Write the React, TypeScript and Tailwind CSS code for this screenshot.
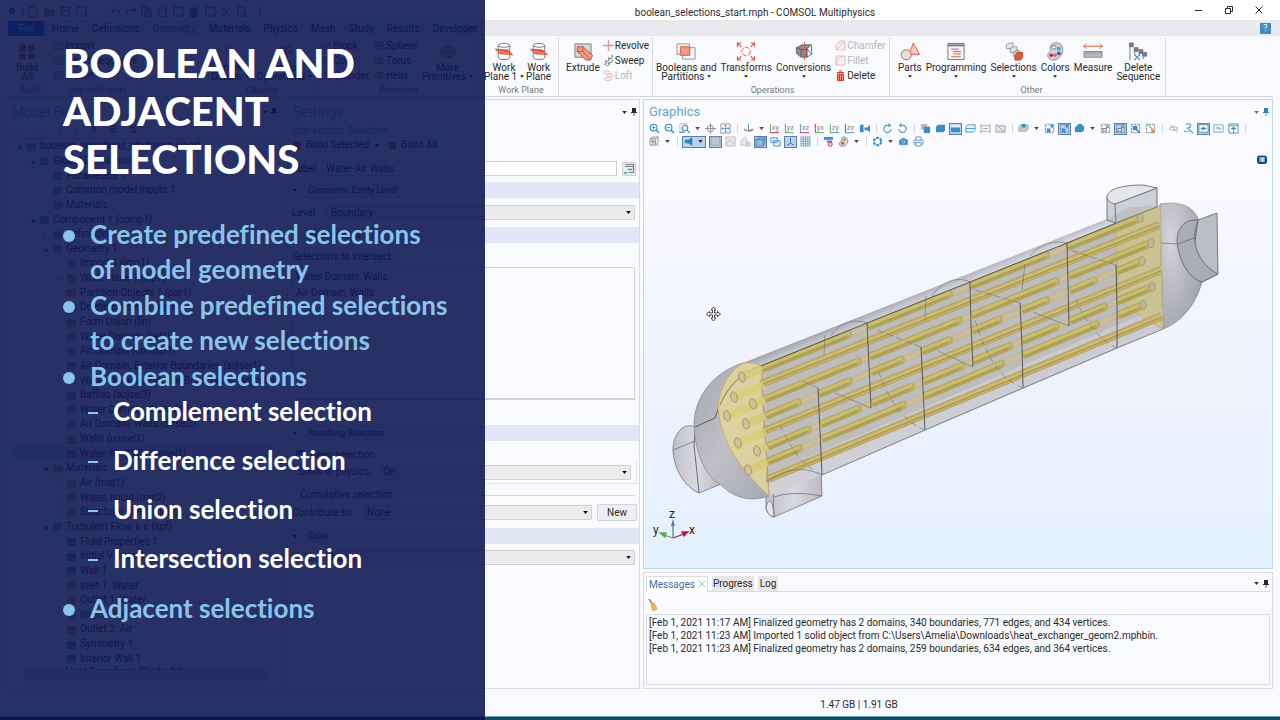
import type { ReactNode } from 'react'
import { Camera, Printer } from 'lucide-react'

const BLUE = '#3d8ec4'
const RED = '#dd5a3c'

const tabs = ['Home', 'Definitions', 'Geometry', 'Materials', 'Physics', 'Mesh', 'Study', 'Results', 'Developer']

const tree = [
  { depth: 0, label: 'boolean_selections_start.mph', tag: '(root)', color: '#3d8ec4', open: true },
  { depth: 1, label: 'Global Definitions', color: '#3d8ec4', open: true },
  { depth: 2, label: 'Parameters 1', color: '#8a8d92' },
  { depth: 2, label: 'Common model inputs 1', color: '#3d8ec4' },
  { depth: 2, label: 'Materials', color: '#b08a4c' },
  { depth: 1, label: 'Component 1', tag: '(comp1)', color: '#2374c4', open: true },
  { depth: 2, label: 'Definitions', color: '#3d8ec4', closed: true },
  { depth: 2, label: 'Geometry 1', color: '#8a8d92', open: true },
  { depth: 3, label: 'Import 1', tag: '(imp1)', color: '#8a8d92' },
  { depth: 3, label: 'Work Plane 1', tag: '(wp1)', color: '#dd5a3c', closed: true },
  { depth: 3, label: 'Partition Objects 1', tag: '(par1)', color: '#dd5a3c' },
  { depth: 3, label: 'Delete Entities 1', tag: '(del1)', color: '#dd5a3c' },
  { depth: 3, label: 'Form Union', tag: '(fin)', color: '#dd5a3c' },
  { depth: 3, label: 'Water Domain', tag: '(sel1)', color: '#8b6cb0' },
  { depth: 3, label: 'Air Domain', tag: '(comsel1)', color: '#8b6cb0' },
  { depth: 3, label: 'Air Domain, Exterior Boundaries', tag: '(adjsel1)', color: '#8b6cb0' },
  { depth: 3, label: 'Water Domain, Exterior Boundaries', tag: '(adjsel2)', color: '#8b6cb0' },
  { depth: 3, label: 'Baffles', tag: '(adjsel3)', color: '#8b6cb0' },
  { depth: 3, label: 'Water Domain, Walls', tag: '(difsel1)', color: '#8a8d92' },
  { depth: 3, label: 'Air Domain, Walls', tag: '(difsel2)', color: '#8a8d92' },
  { depth: 3, label: 'Walls', tag: '(unisel1)', color: '#dd5a3c' },
  { depth: 3, label: 'Water-Air Walls', tag: '(intsel1)', color: '#dd5a3c', selected: true },
  { depth: 2, label: 'Materials', color: '#b08a4c', open: true },
  { depth: 3, label: 'Air', tag: '(mat1)', color: '#b08a4c', closed: true },
  { depth: 3, label: 'Water, liquid', tag: '(mat2)', color: '#b08a4c', closed: true },
  { depth: 3, label: 'Structural steel', tag: '(mat3)', color: '#b08a4c', closed: true },
  { depth: 2, label: 'Turbulent Flow, k-ε', tag: '(spf)', color: '#3d8ec4', open: true },
  { depth: 3, label: 'Fluid Properties 1', color: '#2374c4' },
  { depth: 3, label: 'Initial Values 1', color: '#2374c4' },
  { depth: 3, label: 'Wall 1', color: '#2374c4' },
  { depth: 3, label: 'Inlet 1: Water', color: '#b08a4c' },
  { depth: 3, label: 'Outlet 1: Water', color: '#b08a4c' },
  { depth: 3, label: 'Inlet 2: Air', color: '#b08a4c' },
  { depth: 3, label: 'Outlet 2: Air', color: '#b08a4c' },
  { depth: 3, label: 'Symmetry 1', color: '#2374c4' },
  { depth: 3, label: 'Interior Wall 1', color: '#2374c4' },
]

const indents = ['pl-[5px]', 'pl-[18px]', 'pl-[31px]', 'pl-[45px]']

const messages = [
  '[Feb 1, 2021 11:17 AM] Finalized geometry has 2 domains, 340 boundaries, 771 edges, and 434 vertices.',
  '[Feb 1, 2021 11:23 AM] Imported 1 solid object from C:\\Users\\Amelia\\Downloads\\heat_exchanger_geom2.mphbin.',
  '[Feb 1, 2021 11:23 AM] Finalized geometry has 2 domains, 259 boundaries, 634 edges, and 364 vertices.',
]

function Caret({ className = '' }: { className?: string }) {
  return (
    <svg viewBox="0 0 6 4" className={`h-[3px] w-[6px] shrink-0 ${className}`} aria-hidden>
      <path d="M0 0h6L3 4z" fill="currentColor" />
    </svg>
  )
}

function Pin() {
  return (
    <svg viewBox="0 0 6 8" className="h-[8px] w-[6px]" aria-hidden>
      <path d="M1 0h4v4h1v1H0V4h1zM2.6 5h.8v3h-.8z" fill="currentColor" />
    </svg>
  )
}

function PanelMenu() {
  return (
    <div className="flex items-center gap-[4px]">
      <button aria-label="Panel menu"><Caret className="w-[5px]!" /></button>
      <button aria-label="Pin panel"><Pin /></button>
    </div>
  )
}

/* ---------- ribbon ---------- */

const ribbonIcons: Record<string, ReactNode> = {
  build: <path d="M2 3h7v7H2zM11 3h7v7h-7zM2 12h7v6H2zM11 12h7v6h-7z" fill={RED} />,
  cleanup: <path d="M4 5l12 11M16 5L4 16M10 3v14" stroke={RED} fill="none" />,
  virtual: <path d="M2 12l5-7 5 7-5 5zM12 5h6v6h-6z" stroke={RED} fill="none" />,
  primitives: <><ellipse cx="10" cy="10" rx="8" ry="6" stroke={RED} fill="#f3c5b8" /><path d="M2 10h16M10 4v12" stroke={RED} fill="none" /></>,
  workplane: (
    <>
      <ellipse cx="10" cy="3.5" rx="6" ry="2" fill="#fff" stroke="#74777c" />
      <path d="M4 3.5v13c0 2.6 12 2.6 12 0v-13" fill="none" stroke="#74777c" />
      <path d="M0 7l14 1 6 6-14-1z" fill={RED} />
      <path d="M4 9.500l12 3" stroke="#f5b19f" strokeWidth=".8" />
    </>
  ),
  extrude: (
    <>
      <path d="M1.500 2h17v14h-17z" fill="#d5d7da" stroke="#777a80" />
      <path d="M4 5h6l10 9-2 5h-5L4 10z" fill="#f19a80" stroke="#c9543a" />
      <path d="M4 10h6l8 9M10 10V5" fill="none" stroke="#c9543a" />
    </>
  ),
  booleans: (
    <>
      <path d="M0.500 2h13v11h-13zM6.500 6h13v12h-13z" fill="none" stroke="#8b8e93" />
      <path d="M4 5h10v9H4z" fill="#f19a80" stroke={RED} />
    </>
  ),
  transforms: (
    <>
      <circle cx="10" cy="10" r="4.500" fill="none" stroke={RED} strokeDasharray="5 1.500" />
      <path d="M1 5V1h4M1 1l4 4M15 1h4v4M19 1l-4 4M1 15v4h4M1 19l4-4M15 19h4v-4M19 19l-4-4" fill="none" stroke={RED} strokeWidth="1.200" />
    </>
  ),
  conversions: (
    <>
      <path d="M2 6l6-3h10l-5 4v9H7l-5-4z" fill="#8b8e93" stroke="#66696e" />
      <path d="M2 6l5 2h6M7 8v8M13 7l5 6v-9M13 7v9l5-3" fill="none" stroke="#55585d" strokeWidth=".9" />
      <path d="M10.500 0v19" stroke={RED} />
    </>
  ),
  parts: (
    <>
      <path d="M13.500 1L20 13H9z" fill="#f0cfc8" stroke={RED} />
      <circle cx="6" cy="13.500" r="5.300" fill="#dfe0e3" stroke={RED} />
    </>
  ),
  programming: (
    <>
      <path d="M1.500 1.500h17v17h-17z" fill="#f4f4f5" stroke="#74777c" />
      <path d="M1.500 3.500h17" stroke="#74777c" strokeWidth="2" />
      <path d="M5 7.500h8M7 10h8M7 12.500h8M5 15.500h10" stroke={RED} />
    </>
  ),
  selections: (
    <>
      <path d="M2 3l3-2h4v4L7 7H2zM6 7l3-2h4v4l-2 2H6zM9 11l3-2h4v4l-2 2H9z" fill="#e5e6e8" stroke="#85888e" strokeWidth=".8" />
      <path d="M11 14l2-3h6v5l-2 3h-6z" fill={RED} stroke="#b9442a" />
    </>
  ),
  colors: (
    <>
      <path d="M10 1c6-1 9 4 8 9s-6 10-11 9-6-6-3-8 0-3 1-6 3-4 5-4z" fill="#ced1d6" stroke="#8a8d93" />
      <circle cx="9" cy="5.500" r="2" fill="#fff" stroke="#55779a" />
      <circle cx="14" cy="7" r="2" fill="#48a0d4" />
      <circle cx="14" cy="12" r="2" fill="#3b63a8" />
      <circle cx="10" cy="14" r="1.900" fill="#e8623f" />
      <circle cx="6" cy="14" r="1.900" fill="#b8185c" />
    </>
  ),
  measure: (
    <>
      <path d="M0 4.500h20M3 2L0 4.500 3 7M17 2l3 2.500L17 7" fill="none" stroke={RED} />
      <path d="M.5 10h19v6H.5z" fill="#b9bbc0" stroke="#85888e" />
      <path d="M3 10v3M6 10v3M9 10v3M12 10v3M15 10v3M18 10v3" stroke="#6f7277" strokeWidth=".7" />
    </>
  ),
  deleteSequence: (
    <>
      <path d="M1.500 1v18M1 1h4v4H1zM6 6h4v4H6zM11 8h4v4h-4zM15 11h4v4h-4zM6.500 8v5M11.500 11v4M15.500 12v6" fill="#777a7f" stroke="#777a7f" />
      <path d="M6 13l6 6M12 13l-6 6" stroke={BLUE} strokeWidth="1.200" />
    </>
  ),
}

const smallIcons: Record<string, ReactNode> = {
  import: <path d="M1 2h9v7H1zM1 4h9M3 6h4" stroke="#888" fill="none" />,
  insert: <path d="M1 2h9v7H1zM3 4h4v4z" stroke={RED} fill="none" />,
  block: <path d="M1 4l4-2 4 2v4L5 10 1 8zM1 4l4 2 4-2M5 6v4" stroke="#999" fill="none" />,
  sphere: <><circle cx="5.500" cy="5.500" r="4" stroke={RED} fill="none" /><path d="M1 5.500h9M5.500 1v9" stroke={RED} fill="none" /></>,
  torus: <><ellipse cx="5.500" cy="5.500" rx="4.500" ry="3" stroke={RED} fill="none" /><ellipse cx="5.500" cy="5.500" rx="2" ry="1" stroke={RED} fill="none" /></>,
  revolve: <path d="M5.500 0v11M0 5.500h11" stroke="#d59a8b" strokeWidth="1.400" />,
  sweep: <path d="M1 9c3 1 3-2 1-3 4 1 5-1 3-3 3 1 5 0 4-3M3 11c4 0 3-3 2-3 4 0 5-2 4-4" stroke="#606368" fill="none" />,
  loft: <><ellipse cx="4" cy="2.500" rx="3.500" ry="1.600" fill="#fbeeee" stroke="#ecc3bd" /><ellipse cx="7" cy="5.500" rx="3.500" ry="1.600" fill="#fbeeee" stroke="#ecc3bd" /><ellipse cx="5" cy="9" rx="4" ry="1.600" fill="#fbeeee" stroke="#ecc3bd" /></>,
  chamfer: <path d="M1 10V5l4-4h5v9zM1 10L10 1" stroke="#e3c0bd" fill="#f7eeee" />,
  fillet: <path d="M1 10C1 5 4 1 10 1v9zM1 10V1h9" stroke="#e3c0bd" fill="#f7eeee" />,
  delete: <path d="M2 2.500h7M4 1h3M2.500 4h6v6.500h-6zM4.500 4v6M6.500 4v6" stroke="#c9402a" fill="#f08a70" />,
}

function BigTool({ icon, lines, menu }: { icon: string; lines: string[]; menu?: boolean }) {
  return (
    <button className="flex shrink-0 flex-col items-center whitespace-nowrap pt-[4px]">
      <svg viewBox="0 0 20 20" className="h-[19px] w-[20px]" aria-hidden>{ribbonIcons[icon]}</svg>
      <span className="mt-[2px] flex h-[9px] items-center">{lines[0]}</span>
      <span className="flex h-[9px] items-center gap-[3px]">
        {lines[1]}
        {menu && <Caret className="w-[4px]!" />}
      </span>
    </button>
  )
}

function SmallTools({ items, disabled = [] }: { items: [string, string][]; disabled?: string[] }) {
  return (
    <div className="flex shrink-0 flex-col">
      {items.map(([icon, label]) => (
        <button key={label} className={`flex h-[15px] items-center gap-px whitespace-nowrap ${disabled.includes(label) ? 'text-[#b5b6ba]' : ''}`}>
          <svg viewBox="0 0 11 11" className="size-[11px]" aria-hidden>{smallIcons[icon]}</svg>
          {label}
        </button>
      ))}
    </div>
  )
}

function RibbonGroup({ label, className, children }: { label?: string; className: string; children: ReactNode }) {
  return (
    <div className={`flex shrink-0 flex-col border-r border-[#dcdde2] ${className}`}>
      <div className="flex h-[47px]">{children}</div>
      <div className="h-[10px] text-center text-[9px] leading-[10px] text-[#77797f]">{label}</div>
    </div>
  )
}

function Ribbon() {
  return (
    <div className="mx-[7px] flex h-[61px] shrink-0 overflow-hidden border-b border-[#d4d5db] bg-[#f9fafe] pt-[2px] leading-[9px]">
      <RibbonGroup label="Build" className="w-[39px] pl-[9px]">
        <BigTool icon="build" lines={['Build', 'All']} />
      </RibbonGroup>
      <RibbonGroup label="Import/Export" className="w-[97px] pl-[7px]">
        <SmallTools items={[['import', 'Import'], ['insert', 'Insert Sequence'], ['import', 'Export']]} />
      </RibbonGroup>
      <RibbonGroup label="Cleanup" className="w-[172px] pl-[68px]">
        <div className="flex gap-[8px]">
          <BigTool icon="cleanup" lines={['Remove', 'Details']} menu />
          <BigTool icon="virtual" lines={['Virtual', 'Operations']} menu />
        </div>
      </RibbonGroup>
      <RibbonGroup label="Primitives" className="w-[163px] pl-[6px]">
        <div className="flex gap-[5px]">
          <SmallTools items={[['block', 'Block'], ['block', 'Cone'], ['block', 'Cylinder']]} />
          <SmallTools items={[['sphere', 'Sphere'], ['torus', 'Torus'], ['torus', 'Helix']]} />
          <BigTool icon="primitives" lines={['More', 'Primitives']} menu />
        </div>
      </RibbonGroup>
      <RibbonGroup label="Work Plane" className="w-[81px] pl-[6px]">
        <div className="flex gap-[2px]">
          <BigTool icon="workplane" lines={['Work', 'Plane 1']} menu />
          <BigTool icon="workplane" lines={['Work', 'Plane']} />
        </div>
      </RibbonGroup>
      <RibbonGroup className="w-[94px] pl-[7px]">
        <div className="flex gap-[3px]">
          <BigTool icon="extrude" lines={['Extrude']} />
          <SmallTools items={[['revolve', 'Revolve'], ['sweep', 'Sweep'], ['loft', 'Loft']]} disabled={['Loft']} />
        </div>
      </RibbonGroup>
      <RibbonGroup label="Operations" className="w-[237px] pl-[3px]">
        <div className="flex gap-[4px]">
          <BigTool icon="booleans" lines={['Booleans and', 'Partitions']} menu />
          <BigTool icon="transforms" lines={['Transforms']} menu />
          <BigTool icon="conversions" lines={['Conversions']} menu />
          <SmallTools items={[['chamfer', 'Chamfer'], ['fillet', 'Fillet'], ['delete', 'Delete']]} disabled={['Chamfer', 'Fillet']} />
        </div>
      </RibbonGroup>
      <RibbonGroup label="Other" className="w-[276px] pl-[8px]">
        <div className="flex gap-[4px]">
          <BigTool icon="parts" lines={['Parts']} menu />
          <BigTool icon="programming" lines={['Programming']} menu />
          <BigTool icon="selections" lines={['Selections']} menu />
          <BigTool icon="colors" lines={['Colors']} menu />
          <BigTool icon="measure" lines={['Measure']} />
          <BigTool icon="deleteSequence" lines={['Delete', 'Sequence']} />
        </div>
      </RibbonGroup>
    </div>
  )
}

function TitleBar() {
  return (
    <header className="flex h-[20px] shrink-0 items-center bg-white">
      <div className="flex w-[230px] items-center pl-[8px] pt-[4px]">
        <svg viewBox="0 0 260 12" className="h-[12px] w-[260px] shrink-0" fill="none" stroke="#62656b" aria-hidden>
          <circle cx="4" cy="5" r="3" fill={BLUE} />
          <path d="M15 1v10M21 1h5l3 3v7h-8zM53 1h9v9h-9zM69 1h9v9h-9zM55 1v4h5V1" />
          <path d="M37 3h4l1 1h4v6h-9z" fill="#d9a441" stroke="#b98324" />
          <path d="M103 4h6q3 0 3 4M103 4l3-3M103 4l3 3M128 4h-6q-3 0-3 4M128 4l-3-3M128 4l-3 3M134 1h6v9h-6zM137 3h6v8h-6zM151 2h7v9h-7zM166 1h9v9h-9z" />
          <path d="M182 3h7v8h-7zM181 2h9" fill={BLUE} stroke={BLUE} />
          <path d="M198 1h9v9h-9zM214 1l9 9M214 10l9-9M230 1h7v9h-7zM235 7l4 4M252 1v10" />
        </svg>
      </div>
      <h1 className="flex-1 pt-[5px] text-center leading-[16px]">
        boolean_selections_start.mph - COMSOL Multiphysics
      </h1>
      <div className="absolute right-[17px] top-0 flex h-[20px] items-center gap-[22px]">
        <button aria-label="Minimize">
          <svg viewBox="0 0 8 8" className="size-[8px]"><path d="M0 4.500h7" stroke="currentColor" /></svg>
        </button>
        <button aria-label="Restore">
          <svg viewBox="0 0 8 8" className="size-[8px]"><path d="M.5 2.500h5v5h-5zM2.500 2.500v-2h5v5h-2" fill="none" stroke="currentColor" /></svg>
        </button>
        <button aria-label="Close">
          <svg viewBox="0 0 8 8" className="size-[8px]"><path d="M.5.5l7 7M7.500.5l-7 7" stroke="currentColor" /></svg>
        </button>
      </div>
    </header>
  )
}

/* ---------- left panels ---------- */

function ModelBuilder() {
  return (
    <section className="flex w-[277px] shrink-0 flex-col border border-[#dadbe2] bg-[#f9fafe] px-[4px]">
      <div className="flex h-[24px] items-center justify-between pr-[2px]">
        <h2 className="text-[14px] font-light text-[#5c8fb5]">Model Builder</h2>
        <PanelMenu />
      </div>
      <div className="flex h-[12px] items-center gap-[12px] pl-px leading-[12px] text-[#555]">
        <span>←</span><span>→</span><span>↑</span><span>↓</span><span>≡</span><span>≣</span><span>⇅</span>
      </div>
      <ul className="mt-[2px] flex h-[528px] flex-col border-t border-[#dadbe2]">
        {tree.map((row, i) => (
          <li key={i} className={`flex min-h-0 flex-1 items-center gap-[4px] whitespace-nowrap leading-[14px] ${indents[row.depth]} ${row.selected ? 'bg-[#cfe4f7]' : ''}`}>
            <span className="w-[6px] shrink-0 text-[6px] text-[#555]">{row.open ? '◢' : row.closed ? '▷' : ''}</span>
            <svg viewBox="0 0 10 10" className="size-[9px] shrink-0" aria-hidden>
              <path d="M1 2h8v7H1z" fill={row.color} fillOpacity=".5" stroke={row.color} />
              <path d="M1 4.500h8" stroke={row.color} />
            </svg>
            <span>{row.label} {row.tag && <i>{row.tag}</i>}</span>
          </li>
        ))}
      </ul>
      <p className="h-[4px] overflow-hidden whitespace-nowrap pl-[54px] leading-[11px]">Heat Transfer in Fluids <i>(ht)</i></p>
      <div className="mx-[12px] h-[11px] bg-[#e6e7ec]" />
    </section>
  )
}

function Section({ title }: { title: string }) {
  return (
    <h3 className="flex h-[16px] shrink-0 items-center gap-[10px] bg-[#e0e6f5] pl-[4px] text-[9px]">
      <Caret /> {title}
    </h3>
  )
}

function Select({ id, value }: { id: string; value: string }) {
  return (
    <div className="relative flex-1">
      <select id={id} className="block h-[15px] w-full appearance-none rounded-[1px] border border-[#d0d1d6] bg-[#ebebec] pl-[4px] leading-[12px]">
        <option>{value}</option>
      </select>
      <Caret className="pointer-events-none absolute right-[4px] top-[6px] w-[5px]! text-black" />
    </div>
  )
}

function Settings() {
  return (
    <section className="flex w-[353px] shrink-0 flex-col whitespace-nowrap border border-[#dadbe2] bg-[#f9fafe] leading-[14px]">
      <div className="flex h-[24px] items-center justify-between pl-[5px] pr-[2px]">
        <h2 className="text-[14px] font-light text-[#5c8fb5]">Settings</h2>
        <PanelMenu />
      </div>
      <p className="pl-[4px] text-[#5c8fb5]">Intersection Selection</p>
      <div className="flex gap-[9px] pl-[6px]">
        <button className="flex items-center gap-[5px]"><i className="size-[7px] bg-[#dd5a3c]" />Build Selected <Caret /></button>
        <button className="flex items-center gap-[5px]"><i className="size-[7px] bg-[#dd5a3c]" />Build All</button>
      </div>
      <div className="mt-[9px] flex h-[15px] items-center pl-[4px] pr-[3px]">
        <label htmlFor="label" className="w-[30px]">Label:</label>
        <input id="label" defaultValue="Water-Air Walls" className="h-[15px] min-w-0 flex-1 border border-[#d0d1d6] bg-white pl-[3px]" />
        <button aria-label="Edit description" className="ml-[5px] grid size-[14px] place-items-center border border-[#cfd0d4] bg-[#ececee]">
          <svg viewBox="0 0 12 12" className="size-[12px]"><path d="M2.500 1.500h8v8h-5M2 3.500h9" fill="none" stroke="#777a80" strokeWidth="1.200" /><path d="M1 10h3M5 6.500h4" stroke="#31b08c" strokeWidth="1.500" /></svg>
        </button>
      </div>
      <div className="mt-[6px]"><Section title="Geometric Entity Level" /></div>
      <div className="mt-[7px] flex items-center pl-[4px] pr-[4px]">
        <label htmlFor="level" className="w-[34px]">Level:</label>
        <Select id="level" value="Boundary" />
      </div>
      <div className="mt-[7px]"><Section title="Input Entities" /></div>
      <p className="mt-[7px] pl-[4px]">Selections to intersect:</p>
      <ul className="mx-[4px] mt-[3px] h-[133px] border border-b-2 border-[#d0d1d6] px-[3px] pt-px leading-[16px]">
        <li>Water Domain, Walls</li>
        <li>Air Domain, Walls</li>
      </ul>
      <div className="mt-[25px]"><Section title="Resulting Selection" /></div>
      <div className="ml-[4px] mr-[2px] mt-[7px]">
        <label className="flex h-[13px] items-center gap-[5px] pl-[4px]"><input type="checkbox" defaultChecked className="size-[9px]" />Keep selection</label>
        <div className="flex h-[23px] items-center border border-t-0 border-[#e1e2e7] px-[5px]">
          <label htmlFor="physics" className="w-[80px]">Show in physics:</label>
          <Select id="physics" value="On" />
        </div>
      </div>
      <p className="mx-[4px] mt-[4px] flex items-center gap-[6px] pl-[8px] after:h-px after:flex-1 after:bg-[#d5d6db] after:content-['']">Cumulative selection</p>
      <div className="mt-[2px] flex items-center pl-[4px] pr-[2px]">
        <label htmlFor="contribute" className="w-[70px]">Contribute to:</label>
        <Select id="contribute" value="None" />
        <button className="ml-[5px] h-[17px] w-[40px] rounded-[1px] border border-[#d3d4d9] bg-[#efeff0]">New</button>
      </div>
      <div className="mt-[7px]"><Section title="Color" /></div>
      <div className="mt-[6px] flex items-center px-[4px]">
        <label htmlFor="color" className="w-[34px]">Color:</label>
        <Select id="color" value="None" />
      </div>
    </section>
  )
}

/* ---------- graphics toolbar ---------- */

const dashed = <path d="M1.500 1.500h9v9h-9z" fill="none" stroke="#4b84ab" strokeDasharray="2 1" />

const gIcons: Record<string, ReactNode> = {
  zoomIn: <><circle cx="5" cy="5" r="3.700" fill="none" stroke={BLUE} strokeWidth="1.200" /><path d="M3 5h4M5 3v4" stroke={BLUE} /><path d="M8 8l3 3" stroke={BLUE} strokeWidth="1.600" /></>,
  zoomOut: <><circle cx="5" cy="5" r="3.700" fill="none" stroke={BLUE} strokeWidth="1.200" /><path d="M3 5h4" stroke={BLUE} /><path d="M8 8l3 3" stroke={BLUE} strokeWidth="1.600" /></>,
  zoomBox: <><path d="M1 8V1h8" fill="none" stroke={BLUE} strokeDasharray="1 1" /><circle cx="6.500" cy="5.500" r="3" fill="none" stroke={BLUE} strokeWidth="1.200" /><path d="M9 8l3 3M0 10h6" stroke={BLUE} strokeWidth="1.400" /></>,
  target: <><circle cx="6" cy="6" r="3.500" fill="none" stroke="#8a8d93" /><path d="M6 0v12M0 6h12" stroke="#8a8d93" /></>,
  extents: <><path d="M1 1h10v10H1z" fill="none" stroke="#8a8d93" /><path d="M6 2v8M2 6h8M4.500 3.500L6 2l1.500 1.500M4.500 8.500L6 10l1.500-1.500M3.500 4.500L2 6l1.500 1.500M8.500 4.500L10 6 8.500 7.500" fill="none" stroke={BLUE} strokeWidth=".8" /></>,
  axes: <><path d="M6 8V1" stroke={BLUE} /><path d="M6 9L1 7" stroke="#52b043" strokeWidth="1.400" /><path d="M6 9l5-2" stroke="#b0296c" strokeWidth="1.400" /></>,
  view: <path d="M1 2h4v8H1zM6 5h3v3H6zM9 5l3-3v8L9 8z" fill={BLUE} />,
  rotR: <><path d="M7 2.500a4 4 0 1 0 3 4" fill="none" stroke={BLUE} strokeWidth="1.100" /><path d="M7 0l3 2.500L7 5z" fill={BLUE} /></>,
  rotL: <><path d="M5 2.500a4 4 0 1 1-3 4" fill="none" stroke={BLUE} strokeWidth="1.100" /><path d="M5 0L2 2.500 5 5z" fill={BLUE} /></>,
  copy: <><path d="M1 1h7v6H1z" fill="#b5b8bd" /><path d="M4 4h7v7H4z" fill={BLUE} /></>,
  solid: <path d="M1 4l2-2h8v6l-2 2H1z" fill={BLUE} />,
  half: <><path d="M1 2h10v3H1z" fill="#e6e8ec" /><path d="M1 5h10v5H1z" fill={BLUE} /></>,
  frame: <path d="M1 4l2-2h8v6l-2 2H1zM1 6h10" fill="#e9f3fa" stroke={BLUE} strokeWidth=".9" />,
  ruler: <path d="M1 1v10M11 1v10M1 3h10M1 9h10M3 6h6" fill="none" stroke="#a0a3a9" />,
  noLine: <path d="M1 3h10v7H1zM1 1l10 10" fill="#e3e4e7" stroke="#a0a3a9" />,
  stack: <><path d="M1 4l2-2h8v5l-2 2H1z" fill="#c6c8cc" stroke="#999" strokeWidth=".8" /><path d="M4 1h4v4H4z" fill={BLUE} /></>,
  sel1: <>{dashed}<path d="M3 6h4v4H3zM7 2h3v3H7z" fill={BLUE} /></>,
  box: <path d="M1 5l2-2h8v5l-2 2H1zM4 1h5v3H4z" fill={BLUE} />,
  sel2: <>{dashed}<path d="M3 6h4v3H3zM7 3h2v2H7z" fill="#fff" stroke="#555" strokeWidth=".8" /></>,
  sel3: <>{dashed}<path d="M3 3h5v5H3z" fill={BLUE} /><path d="M7 7l4 4" stroke="#2f6f9f" strokeWidth="1.400" /></>,
  sel4: <>{dashed}<path d="M2 1l5 5 1 5 3-2-5-5z" fill="#e8a64c" stroke="#c07b20" strokeWidth=".6" /></>,
  hide: <path d="M1 6q5-4 10 0-5 4-10 0M3 2l7 8" fill="none" stroke="#9a9da3" strokeWidth=".9" />,
  undo: <path d="M3 1h4q3 2 0 4L4 6M1 9h3M6 6l5 5M5 9h2" fill="none" stroke={BLUE} strokeWidth="1.100" />,
  eye: <><path d="M1 2h10v8H1z" fill="#fff" stroke={BLUE} /><path d="M2.500 6q3.500-3 7 0-3.500 3-7 0" fill={BLUE} /></>,
  eyeOff: <><path d="M1 2h10v8H1z" fill="#fff" stroke="#7f9fb8" /><path d="M3 6q3-2 6 0M4 4l4 4" fill="none" stroke="#8a8d93" /></>,
  eyeBox: <><path d="M1 1h10v10H1z" fill="#fff" stroke={BLUE} /><path d="M1 3h10" stroke={BLUE} /><path d="M3.500 6q2.500-2 5 0-2.500 2-5 0M6 8v3" stroke={BLUE} fill={BLUE} /></>,
  cube: <path d="M1 3l3-2h6v6L7 10H1zM1 3h6l3-2M7 3v7M4 3v7M1 6h6M3 5l8 6" fill="#e9eaed" stroke="#85888e" strokeWidth=".8" />,
  shade: <path d="M2 1h8l1 2v7H1V3z" fill="#c3c6cb" stroke="#9a9da3" />,
  image: <path d="M1 1h10v10H1zM1 9l4-5 3 4 1-1 2 2" fill="#e6e7ea" stroke="#bdbfc4" />,
  imageOff: <path d="M1 6l4-5 3 4v5H1zM7 7h4v4H7z" fill="#e6e7ea" stroke="#bdbfc4" />,
  shaded: <path d="M1 4l2-2h8v7l-2 2H1zM1 4h8v7M9 4l2-2" fill="#8fbfe4" stroke="#3b7dae" strokeWidth=".9" />,
  wire: <path d="M1 2h7v5H1zM4 5h7v6H4z" fill="#e9f3fa" stroke={BLUE} />,
  axis2: <path d="M6 8V2M6 8l-4 2M6 8l4 2" fill="none" stroke="#3a6f9d" />,
  grid: <path d="M1 1h10v10H1zM1 3.500h10M1 6h10M1 8.500h10M3.500 1v10M6 1v10M8.500 1v10" fill="none" stroke="#4b84ab" strokeWidth=".7" />,
  clip: <><path d="M1 1h10v3H1zM4 5h6v2H4z" fill={BLUE} /><circle cx="8" cy="9" r="2" fill="#fff" stroke="#c9386a" strokeWidth="1.200" /></>,
  palette: <><path d="M6 1c5 0 5 5 4 7s-4 4-7 3-2-4 0-5 0-5 3-5z" fill="#d3d5d9" stroke="#8a8d93" /><circle cx="5" cy="8" r="1.600" fill="#d5503a" /><circle cx="7" cy="4" r="1.200" fill="#a77b58" /></>,
  shutter: <circle cx="6" cy="6" r="4" fill="none" stroke={BLUE} strokeWidth="2.200" strokeDasharray="3.200 1" />,
  camera: <Camera x={0} y={0} width={12} height={12} color="#fff" fill={BLUE} strokeWidth={1} />,
  printer: <Printer x={0} y={0} width={12} height={12} color="#5794bd" strokeWidth={2} />,
  speaker: <path d="M1 4h4l4-3v10L5 8H1z" fill="#2f83bd" />,
}

const axisColors: Record<string, string> = { x: '#b0296c', y: '#52b043', z: '#3d8ec4' }

function AxisPlane({ name }: { name: string }) {
  return (
    <>
      <path d="M1.500 1v9.500" stroke={axisColors[name[1]]} />
      <path d="M1 10.500h10" stroke={axisColors[name[0]]} />
      <text x="3" y="8" fontSize="8" fill="#85878d">{name}</text>
    </>
  )
}

// "|" draws a separator and "v" a menu arrow, "*" marks a pressed button, "+" a pressed split button
const toolRow1 = 'zoomIn zoomOut zoomBox v target extents | axes v xy yz xz yx zy zx view | rotR rotL | copy solid half* frame ruler noLine | stack v sel1 sel1* box v sel2 sel2* sel3 sel4 | hide undo eye* eyeOff eyeBox |'.split(' ')
const toolRow2 = 'cube v | speaker+ v+ shade* image imageOff shaded* wire axis2* grid | clip palette v | shutter v camera printer'.split(' ')

function ToolRow({ tools, label }: { tools: string[]; label: string }) {
  return (
    <div className="flex h-[13px] items-center" role="toolbar" aria-label={label}>
      {tools.map((tool, i) => {
        if (tool === '|') return <span key={i} className="flex w-[8px] shrink-0 justify-center"><i className="h-[9px] w-px bg-[#d3d4da]" /></span>
        if (tool === 'v') return <button key={i} aria-label="More" className="flex w-[11px] shrink-0 justify-center text-[#444]"><Caret className="w-[5px]!" /></button>
        if (tool === 'v+') return <button key={i} aria-label="More" className="mr-[2px] flex h-[12px] w-[10px] shrink-0 items-center justify-center border border-l-0 border-[#5d7fae] bg-[#b9d0f1] text-[#333]"><Caret className="w-[5px]!" /></button>
        const name = tool.replace(/[*+]/, '')
        const frame = tool.endsWith('*') ? 'border-[#5d7fae] bg-[#b9d0f1]' : tool.endsWith('+') ? 'w-[14px]! border-r-0 border-[#5d7fae] bg-[#b9d0f1]' : 'border-transparent'
        return (
          <button key={i} aria-label={name} className="flex w-[15px] shrink-0 justify-center">
            <span className={`flex h-[12px] w-[13px] items-center justify-center border ${frame}`}>
              <svg viewBox="0 0 12 12" className="size-[11px] shrink-0">{gIcons[name] ?? <AxisPlane name={name} />}</svg>
            </span>
          </button>
        )
      })}
    </div>
  )
}

/* ---------- heat exchanger model ---------- */

type Tube = { from: [number, number]; to: [number, number]; spans: [number, number][] }

const tubes: Tube[] = [
  { from: [742, 377], to: [1140, 218], spans: [[760, 852], [868, 953], [970, 1050], [1067, 1140]] },
  { from: [753, 404], to: [1151, 243], spans: [[765, 862], [870, 963], [972, 1060], [1069, 1151]] },
  { from: [746, 424], to: [1142, 261], spans: [[766, 802], [819, 853], [871, 905], [922, 953], [972, 1003], [1022, 1050], [1070, 1098], [1117, 1142]] },
  { from: [757, 451], to: [1152, 287], spans: [[768, 812], [821, 862], [872, 915], [924, 965], [973, 1013], [1022, 1060], [1070, 1108], [1117, 1152]] },
  { from: [748, 470], to: [1143, 305], spans: [[768, 803], [822, 907], [924, 1005], [1023, 1100], [1118, 1143]] },
]

const cutTubes: [number, number, number, number][] = [
  [761, 384, 1159, 225],
  [764, 431, 1161, 270],
  [768, 479, 1162, 316],
]

const holes = [[742, 377], [734, 397], [753, 404], [727, 416], [746, 424], [738, 443], [757, 451], [748, 470]]

const baffles = [
  'M818 388L820 432L822 475', 'M867 323L869 366L871 408', 'M921 347L923 388L925 430', 'M970 282L971 325L973 367',
  'M1020 303L1022 346L1023 388', 'M1067 243L1068 285L1069 326', 'M1116 265L1117 307L1117 348',
]

function tubeY(t: Tube, x: number) {
  return t.from[1] + ((x - t.from[0]) * (t.to[1] - t.from[1])) / (t.to[0] - t.from[0])
}

function Model() {
  return (
    <svg viewBox="644 148 628 420" className="block min-h-0 w-full flex-1" role="img" aria-label="Heat exchanger geometry">
      <defs>
        <linearGradient id="shell" x1="0" y1="0" x2=".35" y2="1">
          <stop offset="0" stopColor="#b3b5bc" />
          <stop offset=".45" stopColor="#c4c5ca" />
          <stop offset="1" stopColor="#d3d4d9" />
        </linearGradient>
        <linearGradient id="topStrip" gradientUnits="userSpaceOnUse" x1="925" y1="288" x2="930" y2="300">
          <stop offset="0" stopColor="#a3a5ae" />
          <stop offset="1" stopColor="#dcdde3" />
        </linearGradient>
        <linearGradient id="dome" x1="0" y1="0" x2="1" y2="1">
          <stop offset="0" stopColor="#a3a5ad" />
          <stop offset=".5" stopColor="#c0c1c7" />
          <stop offset="1" stopColor="#a5a7af" />
        </linearGradient>
        <radialGradient id="domeRight" cx=".25" cy=".3" r=".8">
          <stop offset="0" stopColor="#d3d4d8" />
          <stop offset="1" stopColor="#a1a3ab" />
        </radialGradient>
        <linearGradient id="pipe" x1="0" x2="1">
          <stop offset="0" stopColor="#bfc1c8" />
          <stop offset=".5" stopColor="#d9dadf" />
          <stop offset="1" stopColor="#b9bbc2" />
        </linearGradient>
      </defs>

      {/* inlet and outlet pipes */}
      <g stroke="#717379" strokeWidth=".8" strokeLinejoin="round">
        <path d="M695 427C683 422 674 434 673 448C673 469 685 487 699 493L721 484L715 430Z" fill="url(#pipe)" />
        <path d="M695 427L694 445L697 473L699 493" fill="none" stroke="#4e5056" />
        <path d="M673 450L695 441" fill="none" />
        <path d="M766 480L766 508C767 513 770 516 774 517L822 496L821 470L790 466Z" fill="url(#pipe)" />
        <path d="M773 490L774 517M774 497C788 492 806 493 822 496" fill="none" />
        <path d="M766 508C768 498 773 497 774 517C769 516 767 512 766 508" fill="#eceef2" fillOpacity=".8" />
      </g>

      {/* right dome */}
      <path d="M1160 204C1180 201 1194 206 1199 221L1202 282C1196 304 1182 322 1163 329Z" fill="url(#domeRight)" stroke="#85878d" strokeWidth=".7" />
      <path d="M1160 243L1178 244" stroke="#717379" strokeWidth=".7" />
      <g stroke="#5f6167" strokeWidth=".8">
        <path d="M1198 220L1217 213L1218 274L1202 282L1192 262Z" fill="#bcbec5" />
        <path d="M1198 220C1184 219 1177 228 1177 242C1179 262 1189 278 1202 282L1218 274C1199 264 1189 243 1198 220Z" fill="#abadb4" />
        <path d="M1178 244L1194 238" />
      </g>

      {/* shell */}
      <path d="M743 363L1107 219L1130 207L1160 207L1163 329L822 475L769 496L750 366Z" fill="url(#shell)" />
      <path d="M761 366L1116 223L1160 207L1162 306L820 452L768 474Z" fill="#b9b8b3" fillOpacity=".7" />
      <path d="M743 363L1108 219L1116 223L867 323L761 366Z" fill="url(#topStrip)" />

      {/* left dome */}
      <path d="M743 363C711 373 693 400 694 427C696 455 706 477 720 484C732 497 750 503 769 496L761 366Z" fill="url(#dome)" stroke="#85878d" strokeWidth=".7" />
      <path d="M695 427L715 418L721 401C728 385 742 371 761 366" fill="none" stroke="#4e5056" strokeWidth=".9" />

      {/* tube sheets */}
      <path d="M743 363C729 371 718 390 718 409C721 438 736 466 769 496L768 482L766 480L767 472L765 437L762 433L764 424L762 391L759 386L762 377L761 366C756 363 749 362 743 363Z" fill="#ddd59b" fillOpacity=".92" stroke="#cf9f58" strokeWidth=".8" />
      <path d="M761 366C742 371 728 387 720 405" fill="none" stroke="#77735a" strokeWidth=".9" />
      <path d="M1116 226C1126 211 1138 205 1160 206L1161 221L1157 226L1161 231L1161 265L1158 270L1162 274L1162 306L1159 312L1163 317L1163 329L1145 319L1118 300Z" fill="#cbc489" fillOpacity=".8" stroke="#c9a263" strokeWidth=".7" />

      {/* tubes */}
      {tubes.map((t, i) => (
        <g key={i}>
          <path d={`M${t.from[0]} ${t.from[1]}L${t.to[0]} ${t.to[1]}`} stroke="#c7b686" strokeOpacity=".5" strokeWidth="8" strokeLinecap="round" />
          <path d={`M${t.from[0]} ${t.from[1]}L${t.to[0]} ${t.to[1]}`} stroke="#d6c693" strokeOpacity=".5" strokeWidth="3" />
          {t.spans.map(([a, b]) => (
            <g key={a} fill="none">
              <path d={`M${a} ${tubeY(t, a)}L${b - 3} ${tubeY(t, b - 3)}`} stroke="#b0a35e" strokeWidth="8" />
              <ellipse cx={b - 3} cy={tubeY(t, b - 3)} rx="3" ry="4" fill="#b9ad6c" />
              <path d={`M${a} ${tubeY(t, a) - 1}L${b - 3} ${tubeY(t, b - 3) - 1}`} stroke="#c9bd70" strokeWidth="4" />
              <path d={`M${a} ${tubeY(t, a) + 1}L${b - 4} ${tubeY(t, b - 4) + 1}`} stroke="#a89b4c" strokeWidth="1" />
            </g>
          ))}
        </g>
      ))}
      {cutTubes.map(([x1, y1, x2, y2]) => (
        <g key={y1}>
          <path d={`M${x1} ${y1}L${x2} ${y2}`} stroke="#c39a62" strokeWidth="8" />
          <path d={`M${x1} ${y1}L${x2} ${y2}`} stroke="#bfb26b" strokeWidth="6.500" />
          <path d={`M${x1} ${y1 + 1}L${x2} ${y2 + 1}`} stroke="#a79a50" strokeWidth="1.200" />
          <path d={`M${x1} ${y1 - 1}L${x2} ${y2 - 1}`} stroke="#d0c47e" strokeWidth="1.200" />
        </g>
      ))}
      {[[734, 397, 764, 385], [727, 416, 764, 401], [738, 443, 766, 432], [742, 377, 762, 369], [753, 404, 764, 400], [746, 424, 765, 416], [757, 451, 767, 447], [748, 470, 767, 462]].map(([a, b, c, d]) => (
        <path key={b} d={`M${a} ${b}L${c} ${d}`} stroke="#d9cd74" strokeOpacity=".75" strokeWidth="8" />
      ))}
      {holes.map(([x, y]) => (
        <ellipse key={y} cx={x} cy={y} rx="3.300" ry="5.300" fill="#cdc29a" stroke="#b0895a" strokeWidth=".8" transform={`rotate(-15 ${x} ${y})`} />
      ))}
      {tubes.map((t) => (
        <ellipse key={t.to[1]} cx={t.to[0]} cy={t.to[1]} rx="3" ry="4.500" fill="#bfb78f" stroke="#a58d5e" strokeWidth=".7" />
      ))}

      {/* baffles and outlines */}
      <g fill="none" stroke="#4d4e52">
        {baffles.map((d) => <path key={d} d={d} strokeWidth=".9" />)}
        <path d="M761 366L867 323L970 282L1067 243L1116 223" strokeWidth=".9" />
        <path d="M822 475L925 430L1023 388L1117 348L1163 329" strokeWidth=".8" stroke="#6d6f75" />
      </g>
      <g fill="none" stroke="#6c6e74" strokeWidth=".6">
        <path d="M831 336C839 323 852 318 867 323M932 296C942 281 957 276 970 282M1030 256C1040 244 1054 240 1067 243" />
        <path d="M818 388L802 381M921 347L877 330M1020 303L975 290M1116 265L1070 250" strokeDasharray="7 3" />
        <path d="M822 475C800 465 790 445 780 425M925 430C900 420 887 395 878 370M1023 388C997 378 985 352 975 320M1117 348C1095 338 1083 315 1076 300" strokeDasharray="6 4" />
        <path d="M825 335L824 355M926 296L925 320M1025 264L1022 290M871 408L835 393M973 367L938 351M1069 326L1033 312" />
      </g>
      <path d="M766 482C786 468 803 466 822 475" fill="none" stroke="#77797f" strokeWidth=".7" />

      {/* top pipe */}
      <g stroke="#6b6d73" strokeWidth=".9" strokeLinejoin="round">
        <path d="M1107 197L1107 220L1116 223L1157 207L1157 188L1115 204Z" fill="#bfc1c8" fillOpacity=".75" />
        <path d="M1107 197C1108 188 1125 185 1143 185L1157 188L1115 204C1110 203 1107 200 1107 197Z" fill="#e6e7ec" />
        <path d="M1115 204L1116 223" />
      </g>

      {/* axis triad */}
      <g strokeWidth="1.300" fontSize="12">
        <path d="M673 538V524" stroke="#4f7fae" />
        <path d="M671 526L673 519L675 526Z" fill="#4f7fae" />
        <path d="M673 538L664 535" stroke="#56ad50" />
        <path d="M666 533L660 533L665 537Z" fill="#56ad50" stroke="#56ad50" />
        <path d="M673 538L684 534" stroke="#b3175a" />
        <path d="M682 532L688 532L684 536Z" fill="#b3175a" stroke="#b3175a" />
        <text x="669" y="518" fill="#222">z</text>
        <text x="653" y="534" fill="#222">y</text>
        <text x="689" y="534" fill="#222">x</text>
      </g>

      {/* move cursor */}
      <path d="M713.500 307l2.500 3h-1.500v3h3v-1.500l3 2.500-3 2.500v-1.500h-3v3h1.500l-2.500 3-2.500-3h1.500v-3h-3v1.500l-3-2.500 3-2.500v1.500h3v-3h-1.500z" fill="#fff" stroke="#333" strokeWidth=".9" />

      {/* colour cube marker */}
      <rect x="1257" y="155.500" width="10" height="8.500" rx="2.500" fill="#27418f" />
      <path d="M1259 157h6v5h-6z" fill="#3db2c9" />
      <path d="M1261 157.500h3v4h-3z" fill="#e3e25f" />
    </svg>
  )
}

function Graphics() {
  return (
    <section className="flex min-h-0 flex-1 flex-col border border-[#b9dde6] bg-linear-to-b from-[#fbfbff] from-10% via-[#f1f3fd] via-50% to-[#e4f0fd]">
      <div className="flex h-[22px] shrink-0 items-center justify-between pl-[5px] pr-[3px] pt-[2px]">
        <h2 className="text-[13px] text-[#5aa6cf]">Graphics</h2>
        <div className="text-[#2f83bd]"><PanelMenu /></div>
      </div>
      <div className="shrink-0 pl-[3px]">
        <ToolRow tools={toolRow1} label="View tools" />
        <ToolRow tools={toolRow2} label="Rendering tools" />
      </div>
      <Model />
    </section>
  )
}

function Messages() {
  return (
    <section className="flex h-[117px] shrink-0 flex-col border border-[#dadbe2] bg-[#f9fafe] px-[2px] pb-[3px] pt-[3px]">
      <div className="flex h-[16px] items-center justify-between border-b border-[#dadbe2] pr-px">
        <div className="flex h-[16px] gap-[4px]" role="tablist">
          <button role="tab" aria-selected className="flex items-center gap-[4px] border border-b-0 border-[#dadbe2] bg-white px-[2px] text-[#3f6c9d]">
            Messages
            <svg viewBox="0 0 6 6" className="size-[6px]" aria-hidden><path d="M0 0l6 6M6 0L0 6" stroke="#b5b7bd" /></svg>
          </button>
          <button role="tab" className="h-[15px] bg-[#e7e7e8] px-px">Progress</button>
          <button role="tab" className="h-[15px] bg-[#e7e7e8] px-[2px]">Log</button>
        </div>
        <PanelMenu />
      </div>
      <button aria-label="Clear messages" className="ml-[2px] mt-[7px] h-[12px] w-[10px] shrink-0">
        <svg viewBox="0 0 10 12" className="h-[12px] w-[10px]"><path d="M1 0l4 6" stroke="#8b6a3a" strokeWidth="1.300" /><path d="M3 6l3-2 3 6-4 2z" fill="#f0b45a" stroke="#c98d35" strokeWidth=".6" /></svg>
      </button>
      <div className="mt-[3px] min-h-0 flex-1 whitespace-nowrap border border-[#dadbe2] px-[2px] pt-px leading-[13px]">
        {messages.map((m) => <p key={m}>{m}</p>)}
      </div>
    </section>
  )
}

/* ---------- slide overlay ---------- */

const bullets = [
  { text: 'Create predefined selections\nof model geometry' },
  { text: 'Combine predefined selections\nto create new selections' },
  { text: 'Boolean selections', sub: ['Complement selection', 'Difference selection', 'Union selection', 'Intersection selection'] },
  { text: 'Adjacent selections' },
]

function Slide() {
  return (
    <aside className="absolute inset-y-0 left-0 w-[485px] bg-[rgba(10,20,81,0.88)] pl-[63px] pt-[39px] font-['Lato',sans-serif] [font-variant-ligatures:none]">
      <h2 className="w-[320px] text-[40px] font-black leading-[48px] text-white">BOOLEAN AND ADJACENT SELECTIONS</h2>
      <ul className="mt-[34px] flex flex-col gap-px text-[26px] font-bold leading-[35px] text-[#8bc4ea]">
        {bullets.map((b) => (
          <li key={b.text}>
            <div className="flex gap-[15px]">
              <i className="mt-[13px] size-[12px] shrink-0 rounded-full bg-current" />
              <span className="whitespace-pre-line">{b.text}</span>
            </div>
            {b.sub && (
              <ul className="pl-[25px]">
                {b.sub.map((s) => (
                  <li key={s} className="mb-[14px] flex gap-[15px]">
                    <i className="mt-[18px] h-[2px] w-[10px] shrink-0 bg-current" />
                    <span className="text-white">{s}</span>
                  </li>
                ))}
              </ul>
            )}
          </li>
        ))}
      </ul>
    </aside>
  )
}

export default function App() {
  return (
    <div className="relative flex h-screen flex-col overflow-hidden bg-[#f9fafe] font-['Roboto',sans-serif] text-[10px] text-[#2a2a2a]">
      <TitleBar />
      <nav className="flex h-[16px] shrink-0 items-center gap-[13px] bg-[#e8e9ed] pl-[8px] pt-px leading-[15px]">
        <a href="#file" className="mr-[-5px] w-[36px] bg-[#1a77d2] text-center text-white">File</a>
        {tabs.map((tab) => (
          <a key={tab} href={`#${tab.toLowerCase()}`} className={tab === 'Geometry' ? 'text-[#3a86c2]' : ''}>{tab}</a>
        ))}
        <button aria-label="Help" className="ml-auto mr-[9px] size-[11px] bg-[#3d8ec4] text-[9px] leading-[11px] text-white">?</button>
      </nav>
      <Ribbon />
      <main className="mx-[7px] mt-[2px] flex min-h-0 flex-1 gap-[3px]">
        <ModelBuilder />
        <Settings />
        <div className="flex min-w-0 flex-1 flex-col gap-[3px]">
          <Graphics />
          <Messages />
        </div>
      </main>
      <footer className="flex h-[31px] shrink-0 flex-col">
        <p className="flex flex-1 items-center justify-center pl-[438px] pt-[3px]">1.47 GB | 1.91 GB</p>
        <div className="h-[4px] border-t border-[#5fa9bd] bg-[#1a4661]" />
      </footer>
      <Slide />
    </div>
  )
}
